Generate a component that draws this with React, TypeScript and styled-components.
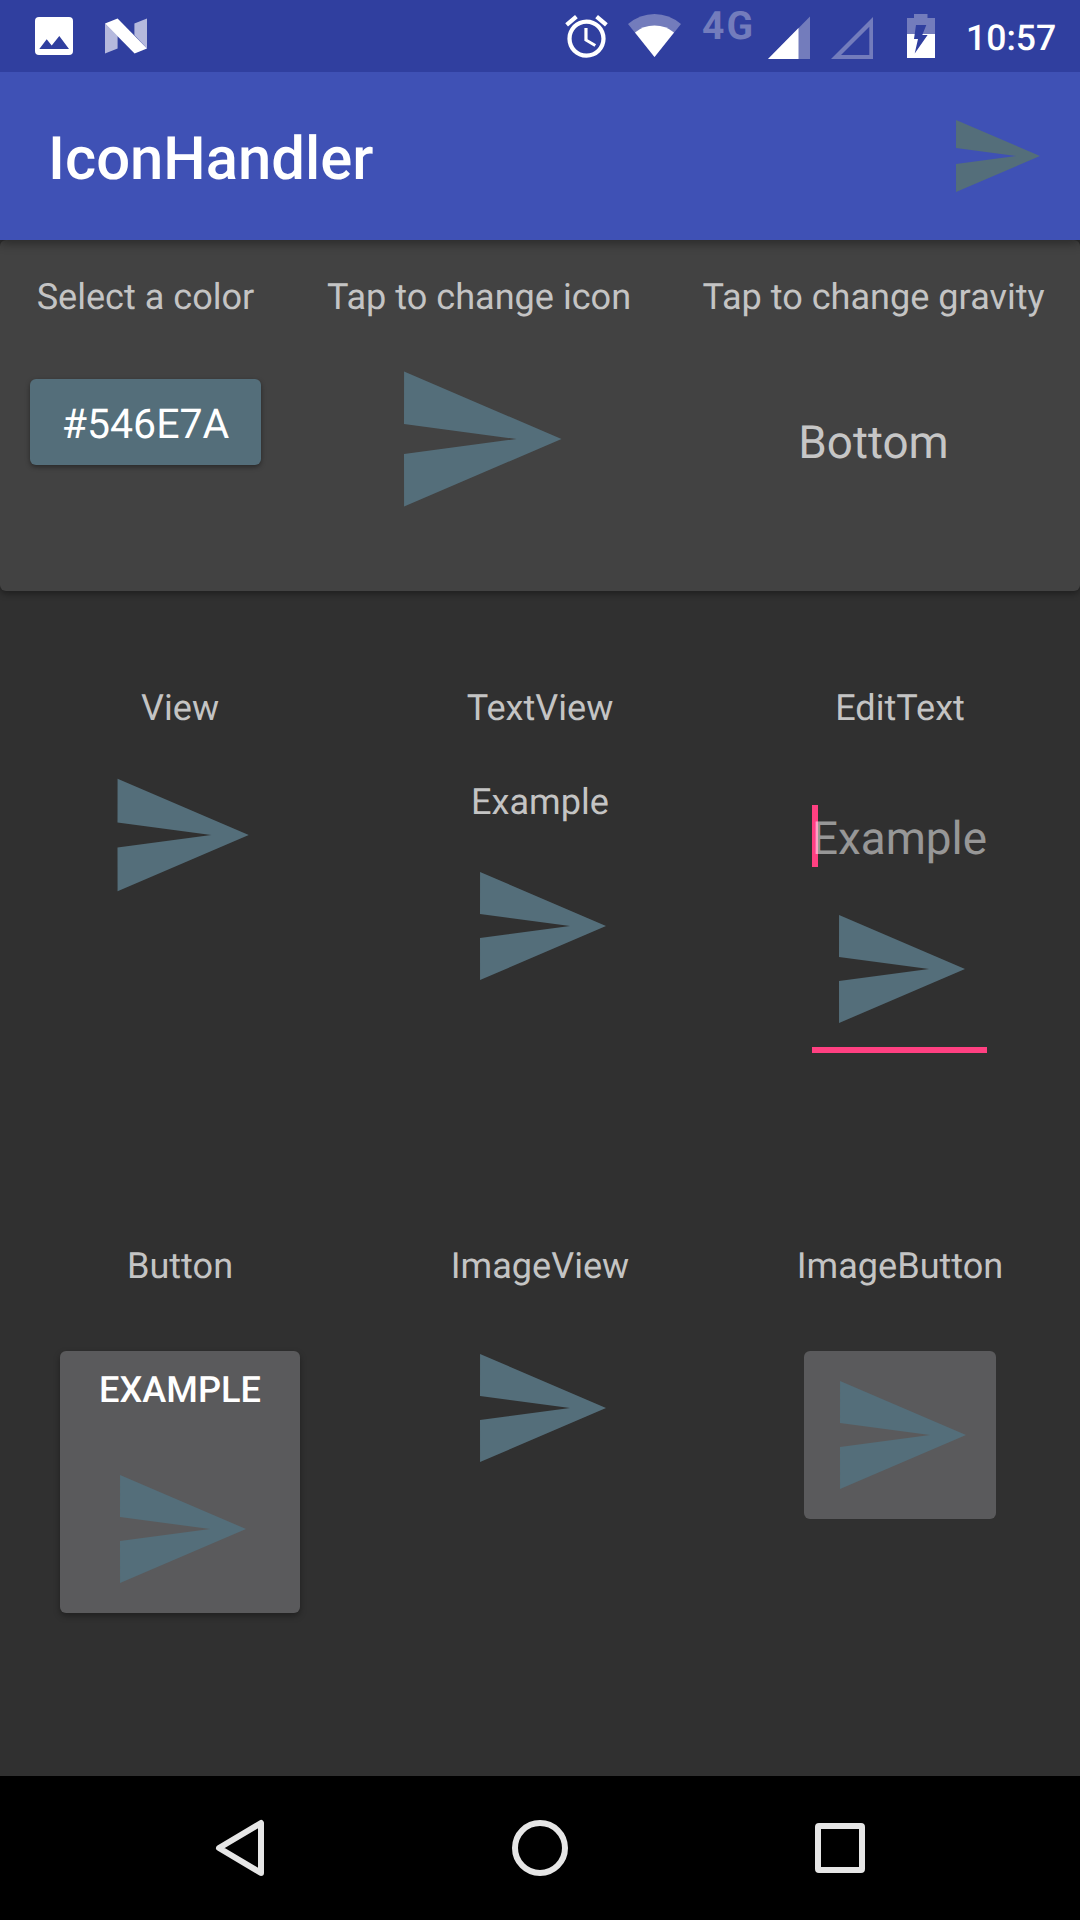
import React from "react";
import styled, { createGlobalStyle } from "styled-components";

const SLATE = "#546e7a";
const ACCENT = "#ff4081";

const GlobalStyle = createGlobalStyle`
  * { box-sizing: border-box; }
  body {
    margin: 0;
    background: #303030;
    font-family: Roboto, "Noto Sans", sans-serif;
    text-rendering: geometricPrecision;
  }
  button { font: inherit; border: 0; margin: 0; padding: 0; text-rendering: inherit; }
`;

const Screen = styled.div`
  display: flex;
  flex-direction: column;
  width: 1080px;
  height: 1920px;
  background: #303030;
  overflow: hidden;
`;

const StatusBar = styled.header`
  display: flex;
  justify-content: space-between;
  flex: none;
  height: 72px;
  padding: 0 25px 0 35px;
  background: #303f9f;
  color: #fff;
  z-index: 2;
`;

const StatusGroup = styled.div<{ $gap?: number }>`
  display: flex;
  gap: ${(p) => p.$gap ?? 0}px;
`;

const Glyph = styled.svg<{ $before?: number }>`
  display: block;
  flex: none;
  margin-left: ${(p) => p.$before ?? 0}px;
`;

const NetworkType = styled.span`
  width: 51px;
  margin-left: 21px;
  font-size: 39px;
  font-weight: 700;
  line-height: 53px;
  letter-spacing: 2px;
  white-space: nowrap;
  color: #737cbc;
`;

const Clock = styled.span`
  width: 89px;
  margin-left: 31px;
  font-size: 35.6px;
  font-weight: 500;
  line-height: 76px;
  white-space: nowrap;
`;

const Toolbar = styled.div`
  display: flex;
  align-items: center;
  justify-content: space-between;
  flex: none;
  height: 168px;
  padding: 0 36px 0 48px;
  background: #3f51b5;
  box-shadow: 0 3px 10px rgba(0, 0, 0, 0.4);
  z-index: 1;
`;

const Title = styled.h1`
  margin: 6px 0 0;
  font-size: 59.8px;
  font-weight: 500;
  line-height: 72px;
  color: #fff;
`;

const SettingsCard = styled.section`
  display: grid;
  grid-template-columns: 291px 376px 413px;
  flex: none;
  height: 351px;
  padding-top: 33px;
  border-radius: 6px;
  background: #424242;
  box-shadow: 0 3px 6px rgba(0, 0, 0, 0.35);
`;

const Cell = styled.div`
  display: flex;
  flex-direction: column;
  align-items: center;
`;

const Label = styled.span<{ $top?: number }>`
  margin-top: ${(p) => p.$top ?? 0}px;
  font-size: 36.1px;
  line-height: 48px;
  white-space: nowrap;
  color: #c4c4c4;
`;

const ColorButton = styled.button`
  width: 231px;
  height: 86px;
  margin-top: 58px;
  padding-top: 5px;
  border-radius: 6px;
  background: ${SLATE};
  box-shadow: 0 2px 5px rgba(0, 0, 0, 0.4);
  color: #fff;
  font-size: 41px;
`;

const Gravity = styled.span`
  margin-top: 95px;
  font-size: 45.8px;
  line-height: 56px;
  color: #c6c6c6;
`;

const Demo = styled.main`
  display: grid;
  grid-template-columns: repeat(3, 1fr);
  grid-template-rows: 558px 1fr;
  flex: 1;
  min-height: 0;
  padding-top: 93px;
`;

const Plane = styled.svg<{ $top?: number }>`
  display: block;
  flex: none;
  margin-top: ${(p) => p.$top ?? 0}px;
  fill: ${SLATE};
`;

const EditBox = styled.div`
  display: flex;
  flex-direction: column;
  align-items: flex-start;
  width: 175px;
  height: 248px;
  margin-top: 73px;
  margin-right: 1px;
  border-bottom: 6px solid ${ACCENT};
  & > svg { margin-left: 15px; }
`;

const Hint = styled.span`
  position: relative;
  z-index: 0;
  width: 175px;
  height: 65px;
  font-size: 45.8px;
  line-height: 69px;
  white-space: nowrap;
  color: rgba(255, 255, 255, 0.5);
  &::before {
    content: "";
    position: absolute;
    z-index: -1;
    left: 0;
    top: 0;
    width: 6px;
    height: 62px;
    background: ${ACCENT};
  }
`;

const RaisedButton = styled.button`
  display: flex;
  flex-direction: column;
  align-items: center;
  width: 240px;
  height: 262px;
  margin-top: 61px;
  padding-top: 15px;
  border-radius: 6px;
  background: #5a5a5c;
  box-shadow: 0 3px 6px rgba(0, 0, 0, 0.35);
  color: #fff;
`;

const ButtonText = styled.span`
  font-size: 36.2px;
  font-weight: 500;
  line-height: 48px;
`;

const ImageButton = styled.button`
  display: flex;
  align-items: center;
  justify-content: center;
  width: 192px;
  height: 168px;
  margin-top: 61px;
  border-radius: 6px;
  background: #5a5a5c;
`;

const NavBar = styled.nav`
  display: flex;
  align-items: center;
  justify-content: center;
  gap: 240px;
  flex: none;
  height: 144px;
  background: #000;
`;

function SendIcon({ size, top }: { size: number; top?: number }) {
  return (
    <Plane $top={top} width={size} height={size} viewBox="0 0 24 24">
      <path d="M2.01 21L23 12 2.01 3 2 10l15 2-15 2z" />
    </Plane>
  );
}

function StatusIcons() {
  return (
    <StatusGroup>
      <Glyph width="51" height="72" viewBox="0 0 51 72" fill="#fff">
        <path
          transform="translate(0 11) scale(2.125)"
          d="M22 5.72l-4.6-3.86-1.29 1.53 4.6 3.86L22 5.72zM7.88 3.39L6.6 1.86 2 5.71l1.29 1.53 4.59-3.85zM12.5 8H11v6l4.75 2.85.75-1.23-4-2.37V8zM12 4c-4.97 0-9 4.03-9 9s4.02 9 9 9a9 9 0 0 0 0-18zm0 16c-3.87 0-7-3.13-7-7s3.13-7 7-7 7 3.13 7 7-3.13 7-7 7z"
        />
      </Glyph>
      <Glyph $before={16} width="53" height="72" viewBox="0 0 53 72">
        <path d="M26.5 57L0 24Q12 14 26.5 14T53 24z" fill="#737cbc" />
        <path d="M26.5 57L7 32.6Q15 25.6 26.5 25.6T46 32.6z" fill="#fff" />
      </Glyph>
      <NetworkType>4G</NetworkType>
      <Glyph $before={15} width="42" height="72" viewBox="0 0 42 72">
        <path d="M0 59L42 16.5V59z" fill="#737cbc" />
        <path d="M0 59L30.5 28.1V59z" fill="#fff" />
      </Glyph>
      <Glyph $before={20.5} width="42.5" height="72" viewBox="0 0 42.5 72">
        <path
          fillRule="evenodd"
          d="M0 59L42.5 16.5V59zM10 55H38.3V26.7z"
          fill="#737cbc"
        />
      </Glyph>
      <Glyph $before={34} width="28" height="72" viewBox="0 0 28 72">
        <path d="M7 14H20.5V18H28V34H0V18H7z" fill="#737cbc" />
        <path d="M0 34H28V58H0z" fill="#fff" />
        <path d="M9 25H19.3L15.3 35H20.6L7.7 53.5L11 39H7z" fill="#303f9f" />
      </Glyph>
      <Clock>10:57</Clock>
    </StatusGroup>
  );
}

export default function App() {
  return (
    <Screen>
      <GlobalStyle />
      <StatusBar>
        <StatusGroup $gap={32}>
          <Glyph width="38" height="72" viewBox="0 0 38 72">
            <rect y="17" width="38" height="38" rx="4" fill="#fff" />
            <path d="M4.3 49L11.7 39.3 16.7 45.4 24.3 36 34 49z" fill="#303f9f" />
          </Glyph>
          <Glyph width="42" height="72" viewBox="0 0 42 72">
            <path d="M0 23.5L12.6 36V48.5L0 53.5z" fill="#b5b9dd" />
            <path d="M29.4 23.5L42 18.5V48.5L29.4 35z" fill="#b5b9dd" />
            <path d="M0 23.5L12.6 18.4L42 48.5L29.6 53.5z" fill="#fff" />
          </Glyph>
        </StatusGroup>
        <StatusIcons />
      </StatusBar>

      <Toolbar>
        <Title>IconHandler</Title>
        <SendIcon size={96} />
      </Toolbar>

      <SettingsCard>
        <Cell>
          <Label>Select a color</Label>
          <ColorButton>#546E7A</ColorButton>
        </Cell>
        <Cell>
          <Label>Tap to change icon</Label>
          <SendIcon size={180} top={28} />
        </Cell>
        <Cell>
          <Label>Tap to change gravity</Label>
          <Gravity>Bottom</Gravity>
        </Cell>
      </SettingsCard>

      <Demo>
        <Cell>
          <Label>View</Label>
          <SendIcon size={150} top={28} />
        </Cell>
        <Cell>
          <Label>TextView</Label>
          <Label $top={46}>Example</Label>
          <SendIcon size={144} top={28} />
        </Cell>
        <Cell>
          <Label>EditText</Label>
          <EditBox>
            <Hint>Example</Hint>
            <SendIcon size={144} top={27} />
          </EditBox>
        </Cell>
        <Cell>
          <Label>Button</Label>
          <RaisedButton>
            <ButtonText>EXAMPLE</ButtonText>
            <SendIcon size={144} top={43} />
          </RaisedButton>
        </Cell>
        <Cell>
          <Label>ImageView</Label>
          <SendIcon size={144} top={46} />
        </Cell>
        <Cell>
          <Label>ImageButton</Label>
          <ImageButton>
            <SendIcon size={144} />
          </ImageButton>
        </Cell>
      </Demo>

      <NavBar>
        <Glyph width="60" height="60" viewBox="0 0 60 60" fill="none" stroke="#e6e6e6" strokeWidth="6" strokeLinejoin="round">
          <path d="M51 5V55L9 30z" />
        </Glyph>
        <Glyph width="60" height="60" viewBox="0 0 60 60" fill="none" stroke="#e6e6e6" strokeWidth="6">
          <circle cx="30" cy="30" r="25" />
        </Glyph>
        <Glyph width="60" height="60" viewBox="0 0 60 60" fill="none" stroke="#e6e6e6" strokeWidth="6">
          <rect x="8" y="8" width="44" height="44" rx="1" />
        </Glyph>
      </NavBar>
    </Screen>
  );
}
